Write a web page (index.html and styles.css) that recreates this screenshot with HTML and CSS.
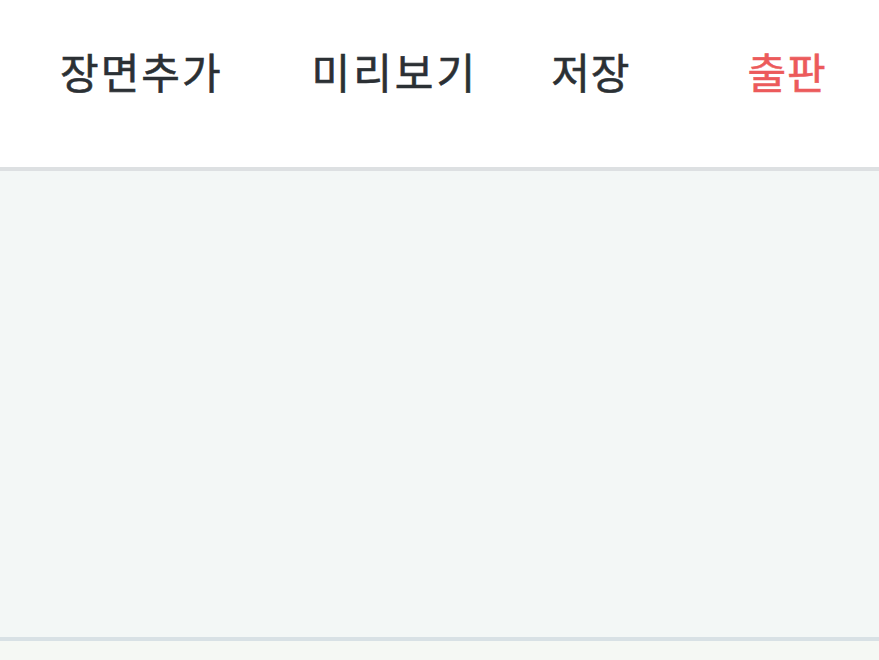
FILE: index.html
```html
<!DOCTYPE html>
<html lang="ko">
<head>
<meta charset="utf-8">
<link rel="stylesheet" href="styles.css">
</head>
<body>
<header class="topbar">
  <nav class="menu">
    <span class="item item-add">장면추가</span>
    <span class="item item-preview">미리보기</span>
    <span class="item item-save">저장</span>
    <span class="item item-publish">출판</span>
  </nav>
</header>
<main class="canvas"></main>
<footer class="bottom"></footer>
</body>
</html>
```
FILE: styles.css
```css
html, body {
  margin: 0;
  padding: 0;
}
body {
  width: 879px;
  height: 660px;
  overflow: hidden;
  background: #f5f8f5;
  font-family: "Noto Sans CJK KR", "Noto Sans", sans-serif;
}
.topbar {
  height: 167px;
  background: #ffffff;
  border-bottom: 4px solid #dde0e2;
}
.menu {
  display: flex;
  align-items: center;
  height: 142px;
  padding-left: 60px;
}
.item {
  font-size: 42px;
  font-weight: 400;
  letter-spacing: 2px;
  color: #2b3034;
  line-height: 1;
  white-space: nowrap;
  -webkit-text-stroke: 0.6px currentColor;
}
.item-add { margin-right: 89px; }
.item-preview { margin-right: 73px; letter-spacing: 3px; }
.item-save { margin-right: 117px; letter-spacing: 1px; }
.item-publish { color: #ec5a5b; letter-spacing: 1px; }
.canvas {
  height: 466px;
  background: #f3f7f6;
  border-bottom: 4px solid #d8e1e5;
}
.bottom {
  height: 30px;
  background: #f5f8f4;
}
```
